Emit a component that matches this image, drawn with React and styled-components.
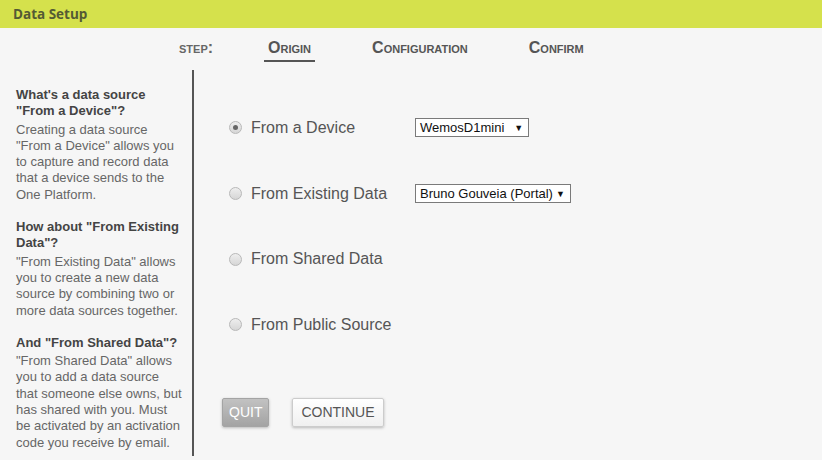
import React from "react";
import styled, { createGlobalStyle } from "styled-components";

const GlobalStyle = createGlobalStyle`
  body {
    margin: 0;
    background: #f6f6f6;
    font-family: "Liberation Sans", Arial, sans-serif;
  }
`;

const Page = styled.div`
  width: 822px;
  height: 460px;
  background: #f6f6f6;
  overflow: hidden;
`;

const Header = styled.div`
  height: 28px;
  background: #d5e14c;
  display: flex;
  align-items: center;
  padding-left: 13px;
  font-family: "Open Sans", "Liberation Sans", sans-serif;
  font-weight: 700;
  font-size: 13.5px;
  color: #545a34;
`;

const Steps = styled.div`
  height: 42px;
  display: flex;
  align-items: flex-start;
  padding: 11px 0 0 179px;
  gap: 61px;
  box-sizing: border-box;
`;

const Step = styled.div`
  font-variant: small-caps;
  font-weight: 700;
  font-size: 16px;
  color: #555;
  padding: 0 4px 3px;
  margin: 0 -4px;
  border-bottom: 2px solid ${(p) => (p.active ? "#555" : "transparent")};
`;

const StepLabel = styled(Step)`
  color: #666;
  margin-right: -10px;
`;

const Body = styled.div`
  display: flex;
  height: 386px;
`;

const Sidebar = styled.div`
  width: 167.5px;
  padding: 17px 8.5px 0 16px;
  border-right: 2px solid #555;
  font-size: 13px;
  line-height: 16.3px;
  color: #666;
`;

const Topic = styled.div`
  margin-bottom: 16px;
`;

const TopicTitle = styled.div`
  font-weight: 700;
  color: #444;
  margin-bottom: 2px;
`;

const Main = styled.div`
  padding: 25px 0 0 35px;
  display: flex;
  flex-direction: column;
`;

const Option = styled.div`
  height: 65.7px;
  display: flex;
  align-items: center;
`;

const Radio = styled.span`
  width: 11px;
  height: 11px;
  border-radius: 50%;
  border: 1px solid #b8b8b8;
  background: linear-gradient(#eee, #d6d6d6);
  display: flex;
  align-items: center;
  justify-content: center;
  margin-right: 9px;
  &::after {
    content: "";
    width: 5px;
    height: 5px;
    border-radius: 50%;
    background: ${(p) => (p.checked ? "#666" : "transparent")};
  }
`;

const OptionLabel = styled.span`
  width: 164px;
  font-size: 16px;
  color: #555;
`;

const Select = styled.div`
  height: 17px;
  border: 1px solid #7a7a7a;
  background: #fff;
  display: flex;
  align-items: center;
  padding: 0 5px 0 4px;
  gap: ${(p) => p.gap}px;
  font-size: 13px;
  color: #111;
`;

const Arrow = styled.span`
  font-size: 9px;
  color: #111;
`;

const Buttons = styled.div`
  display: flex;
  gap: 23px;
  margin: 40px 0 0 -7px;
`;

const Button = styled.button`
  height: 29px;
  padding: 0 ${(p) => (p.primary ? 6 : 8)}px;
  font-family: "Liberation Sans", Arial, sans-serif;
  font-size: 14px;
  border-radius: 2px;
  border: 1px solid ${(p) => (p.primary ? "#a4a4a4" : "#ccc")};
  color: ${(p) => (p.primary ? "#fff" : "#555")};
  background: ${(p) =>
    p.primary ? "linear-gradient(#c2c2c2, #a3a3a3)" : "linear-gradient(#fff, #f0f0f0)"};
  box-shadow: 0 1px 3px rgba(0, 0, 0, 0.25);
`;

const topics = [
  {
    title: 'What\'s a data source "From a Device"?',
    text: 'Creating a data source "From a Device" allows you to capture and record data that a device sends to the One Platform.',
  },
  {
    title: 'How about "From Existing Data"?',
    text: '"From Existing Data" allows you to create a new data source by combining two or more data sources together.',
  },
  {
    title: 'And "From Shared Data"?',
    text: '"From Shared Data" allows you to add a data source that someone else owns, but has shared with you. Must be activated by an activation code you receive by email.',
  },
];

const options = [
  { label: "From a Device", checked: true, select: "WemosD1mini", gap: 10 },
  { label: "From Existing Data", select: "Bruno Gouveia (Portal)", gap: 3 },
  { label: "From Shared Data" },
  { label: "From Public Source" },
];

export default function App() {
  return (
    <Page>
      <GlobalStyle />
      <Header>Data Setup</Header>
      <Steps>
        <StepLabel>step:</StepLabel>
        <Step active>Origin</Step>
        <Step>Configuration</Step>
        <Step>Confirm</Step>
      </Steps>
      <Body>
        <Sidebar>
          {topics.map((t) => (
            <Topic key={t.title}>
              <TopicTitle>{t.title}</TopicTitle>
              {t.text}
            </Topic>
          ))}
        </Sidebar>
        <Main>
          {options.map((o) => (
            <Option key={o.label}>
              <Radio checked={o.checked} />
              <OptionLabel>{o.label}</OptionLabel>
              {o.select && (
                <Select gap={o.gap}>
                  {o.select}
                  <Arrow>▼</Arrow>
                </Select>
              )}
            </Option>
          ))}
          <Buttons>
            <Button primary>QUIT</Button>
            <Button>CONTINUE</Button>
          </Buttons>
        </Main>
      </Body>
    </Page>
  );
}
